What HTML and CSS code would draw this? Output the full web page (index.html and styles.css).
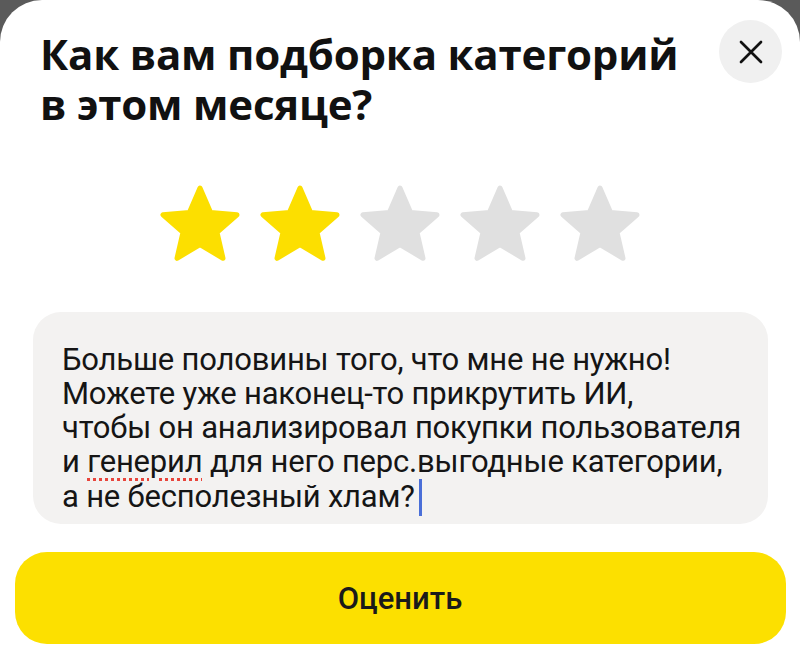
FILE: index.html
```html
<!DOCTYPE html>
<html lang="ru">
<head>
<meta charset="utf-8">
<link rel="stylesheet" href="styles.css">
</head>
<body>
<div class="sheet">
  <div class="header">
    <h1 class="title">Как вам подборка категорий<br>в этом месяце?</h1>
    <button class="close" aria-label="Закрыть">
      <svg width="26" height="26" viewBox="0 0 26 26"><path d="M3 3L23 23M23 3L3 23" stroke="#111" stroke-width="2.7" stroke-linecap="round"/></svg>
    </button>
  </div>
  <div class="stars">
    <svg class="star on" viewBox="0 0 84 80"><path d="M42 3 L52.6 27.5 L79 29.8 L59 47.3 L65 73.3 L42 59.6 L19 73.3 L25 47.3 L5 29.8 L31.4 27.5 Z"/></svg>
    <svg class="star on" viewBox="0 0 84 80"><path d="M42 3 L52.6 27.5 L79 29.8 L59 47.3 L65 73.3 L42 59.6 L19 73.3 L25 47.3 L5 29.8 L31.4 27.5 Z"/></svg>
    <svg class="star" viewBox="0 0 84 80"><path d="M42 3 L52.6 27.5 L79 29.8 L59 47.3 L65 73.3 L42 59.6 L19 73.3 L25 47.3 L5 29.8 L31.4 27.5 Z"/></svg>
    <svg class="star" viewBox="0 0 84 80"><path d="M42 3 L52.6 27.5 L79 29.8 L59 47.3 L65 73.3 L42 59.6 L19 73.3 L25 47.3 L5 29.8 L31.4 27.5 Z"/></svg>
    <svg class="star" viewBox="0 0 84 80"><path d="M42 3 L52.6 27.5 L79 29.8 L59 47.3 L65 73.3 L42 59.6 L19 73.3 L25 47.3 L5 29.8 L31.4 27.5 Z"/></svg>
  </div>
  <div class="field">
    <p class="text">Больше половины того, что мне не нужно!<br>Можете уже наконец-то прикрутить ИИ,<br>чтобы он анализировал покупки пользователя<br>и <span class="typo">генерил</span> для него перс.выгодные категории,<br>а не бесполезный хлам?<span class="caret"></span></p>
  </div>
  <button class="submit">Оценить</button>
</div>
</body>
</html>
```
FILE: styles.css
```css
html, body {
  margin: 0;
  padding: 0;
}
body {
  background: #5a5a5a;
  width: 800px;
  height: 661px;
  overflow: hidden;
  font-family: Roboto, "Noto Sans", sans-serif;
}
.sheet {
  background: #fff;
  height: 661px;
  border-radius: 42px 42px 0 0;
  box-sizing: border-box;
  padding: 20px 15px 0 15px;
  display: flex;
  flex-direction: column;
}
.header {
  display: flex;
  justify-content: space-between;
  align-items: flex-start;
  padding-left: 25px;
}
.title {
  margin: 9px 0 0 0;
  font-family: "Open Sans", Roboto, sans-serif;
  font-size: 42px;
  line-height: 50px;
  font-weight: 700;
  color: #111;
  letter-spacing: -0.2px;
}
.close {
  width: 63px;
  height: 63px;
  border-radius: 50%;
  border: none;
  background: #f0f0f0;
  display: flex;
  align-items: center;
  justify-content: center;
  padding: 0;
  margin-right: 3px;
}
.stars {
  display: flex;
  justify-content: center;
  gap: 16px;
  margin-top: 56px;
}
.star {
  width: 84px;
  height: 80px;
}
.star path {
  fill: #e0e0e0;
  stroke: #e0e0e0;
  stroke-width: 5;
  stroke-linejoin: round;
}
.star.on path {
  fill: #fcdf00;
  stroke: #fcdf00;
}
.field {
  margin: 47px 17px 0 18px;
  background: #f3f2f1;
  border-radius: 28px;
  padding: 31px 0 0 29px;
  height: 212px;
  box-sizing: border-box;
}
.text {
  margin: 0;
  font-size: 31px;
  line-height: 34px;
  color: #151515;
  letter-spacing: -0.2px;
  white-space: nowrap;
}
.typo {
  text-decoration: underline dotted #e8453c;
  text-decoration-thickness: 3px;
  text-underline-offset: 6px;
}
.caret {
  display: inline-block;
  width: 3px;
  height: 37px;
  background: #4a6fd8;
  vertical-align: -9px;
  margin-left: 4px;
}
.submit {
  margin-top: 28px;
  height: 92px;
  border: none;
  border-radius: 32px;
  background: #fce000;
  font-family: Roboto, "Noto Sans", sans-serif;
  font-size: 31px;
  font-weight: 500;
  color: #1a1a1a;
  width: 771px;
  align-self: center;
}
```
